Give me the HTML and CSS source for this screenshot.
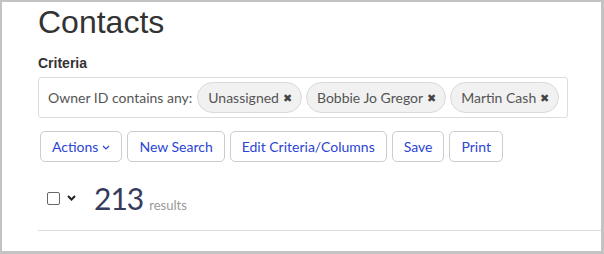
FILE: index.html
```html
<!DOCTYPE html>
<html lang="en">
<head>
    <meta charset="UTF-8">
    <title>Contacts</title>
    <link rel="stylesheet" href="styles.css">
</head>
<body>
    <div class="panel">
        <h1 class="page-title">Contacts</h1>
        <div class="criteria">
            <h2 class="criteria-label">Criteria</h2>
            <div class="criteria-box">
                <span class="criteria-text">Owner ID contains any:</span>
                <span class="chip">Unassigned <span class="chip-x">&#x2716;</span></span>
                <span class="chip">Bobbie Jo Gregor <span class="chip-x">&#x2716;</span></span>
                <span class="chip">Martin Cash <span class="chip-x">&#x2716;</span></span>
            </div>
        </div>
        <div class="toolbar">
            <button class="btn btn-menu">Actions
                <svg class="caret" width="8" height="5" viewBox="0 0 8 5"><path d="M1 1l3 3 3-3" fill="none" stroke="currentColor" stroke-width="1.2"/></svg>
            </button>
            <button class="btn">New Search</button>
            <button class="btn">Edit Criteria/Columns</button>
            <button class="btn">Save</button>
            <button class="btn">Print</button>
        </div>
        <div class="results">
            <span class="check"></span>
            <svg class="select-caret" width="9" height="6" viewBox="0 0 9 6"><path d="M1 1l3.5 3.5L8 1" fill="none" stroke="#222" stroke-width="2"/></svg>
            <span class="count">213</span>
            <span class="count-label">results</span>
        </div>
        <div class="divider"></div>
    </div>
</body>
</html>
```

FILE: styles.css
```css
* {
    margin: 0;
    padding: 0;
    box-sizing: border-box;
}

body {
    background: #c3c3c3;
    font-family: Lato, "Liberation Sans", sans-serif;
    color: #555;
}

.panel {
    background: #fff;
    margin: 2px 3px 0 2px;
    height: 249px;
    padding: 2px 0 0 36px;
}

.page-title {
    font-family: "Liberation Sans", Arial, sans-serif;
    font-weight: normal;
    font-size: 32px;
    line-height: 36px;
    color: #333;
}

.criteria {
    margin-top: 15px;
    margin-right: 33px;
}

.criteria-label {
    font-family: "Liberation Sans", Arial, sans-serif;
    font-size: 14px;
    line-height: 16px;
    font-weight: bold;
    color: #333;
}

.criteria-box {
    margin-top: 6px;
    border: 1px solid #ddd;
    border-radius: 3px;
    height: 41px;
    display: flex;
    align-items: center;
    gap: 4px;
    padding: 0 6px 0 9px;
    font-size: 14px;
    white-space: nowrap;
}

.criteria-text {
    margin-right: 1px;
    flex-shrink: 0;
}

.chip {
    display: flex;
    align-items: center;
    flex-shrink: 0;
    height: 31px;
    padding: 0 9px 0 10px;
    background: #f1f1f1;
    border: 1px solid #d9d9d9;
    border-radius: 16px;
    color: #555;
}

.chip-x {
    font-size: 11px;
    color: #444;
    margin-left: 4px;
}

.toolbar {
    display: flex;
    gap: 5px;
    margin-top: 13px;
    padding-left: 2px;
}

.btn {
    font-family: Lato, "Liberation Sans", sans-serif;
    font-size: 14px;
    color: #2b45d4;
    background: #fff;
    border: 1px solid #ccc;
    border-radius: 5px;
    height: 31px;
    padding: 0 11px;
    display: flex;
    align-items: center;
    gap: 4px;
}

.caret {
    margin-top: 1px;
}

.results {
    display: flex;
    align-items: baseline;
    margin-top: 19px;
    padding-left: 9px;
    height: 34px;
}

.check {
    width: 13px;
    height: 13px;
    border: 1px solid #666;
    border-radius: 2px;
    align-self: center;
}

.select-caret {
    align-self: center;
    margin-left: 7px;
}

.count {
    font-size: 30px;
    color: #373b5c;
    margin-left: 18px;
    line-height: 34px;
    letter-spacing: -1px;
}

.count-label {
    font-size: 13px;
    color: #999;
    margin-left: 6px;
}

.divider {
    margin-top: 15px;
    border-top: 1px solid #ddd;
}
```
